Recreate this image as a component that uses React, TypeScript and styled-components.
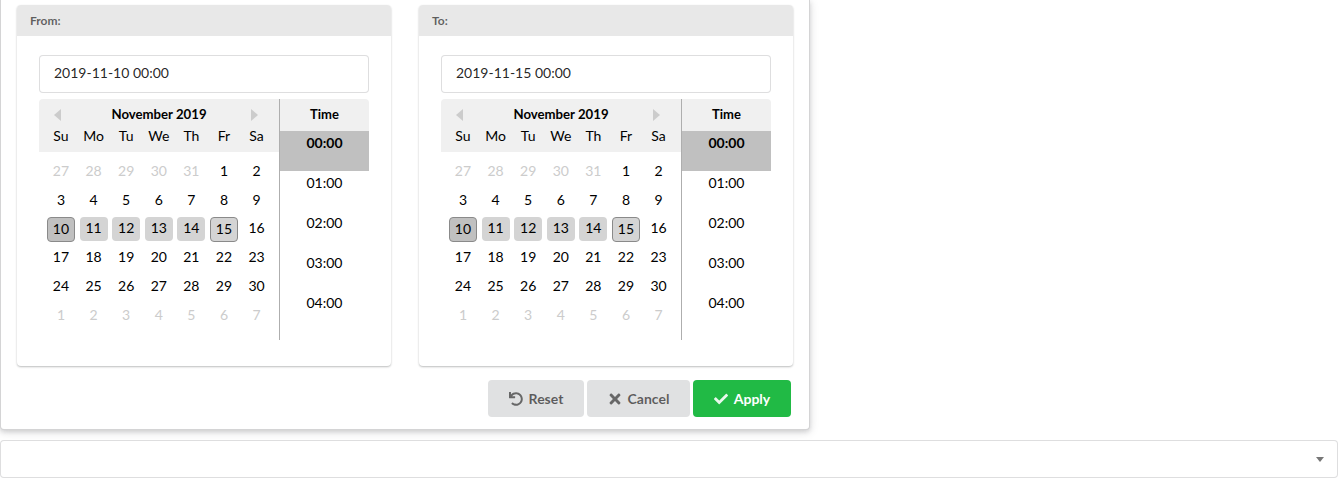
import React from "react";
import styled, { createGlobalStyle } from "styled-components";
import { FaCheck, FaTimes, FaUndo } from "react-icons/fa";

const GlobalStyle = createGlobalStyle`
  html, body {
    margin: 0;
    padding: 0;
    background: #fff;
    font-family: "Lato", "Helvetica Neue", Arial, sans-serif;
    color: rgba(0, 0, 0, 0.87);
  }
  * { box-sizing: border-box; }
`;

const Page = styled.div`
  width: 1338px;
  height: 478px;
  overflow: hidden;
`;

const Popup = styled.div`
  width: 810px;
  height: 430px;
  padding: 5px 16px 0;
  background: #fff;
  border: 1px solid #d4d4d5;
  border-top: none;
  border-radius: 0 0 4px 4px;
  box-shadow: 0 2px 4px 0 rgba(34, 36, 38, 0.12), 0 2px 10px 0 rgba(34, 36, 38, 0.15);
`;

const Pickers = styled.div`
  display: flex;
  gap: 28px;
`;

const Card = styled.div`
  flex: none;
  width: 374px;
  height: 361px;
  border-radius: 4px;
  background: #fff;
  box-shadow: 0 1px 2px 0 rgba(34, 36, 38, 0.3);
`;

const CardHeader = styled.div`
  height: 31px;
  padding: 0 13px;
  display: flex;
  align-items: center;
  background: #e8e8e8;
  border-radius: 4px 4px 0 0;
  font-size: 12px;
  font-weight: 700;
  color: rgba(0, 0, 0, 0.6);
`;

const CardBody = styled.div`
  padding: 19px 22px 0;
`;

const DateInput = styled.input`
  display: block;
  width: 330px;
  height: 38px;
  padding: 0 14px 3px;
  border: 1px solid rgba(34, 36, 38, 0.15);
  border-radius: 4px;
  outline: none;
  font-family: inherit;
  font-size: 14px;
  color: rgba(0, 0, 0, 0.87);
`;

const Calendar = styled.div`
  display: flex;
  margin-top: 6px;
  width: 330px;
  height: 241px;
`;

const Month = styled.div`
  width: 241px;
  border-right: 1px solid #aeaeae;
`;

const MonthHeader = styled.div`
  height: 53px;
  background: #f0f0f0;
  border-top-left-radius: 4px;
`;

const MonthTitle = styled.div`
  position: relative;
  height: 30px;
  display: flex;
  align-items: center;
  justify-content: center;
  font-size: 13.2px;
  font-weight: 700;
  color: #000;
`;

const Arrow = styled.span<{ $side: "left" | "right" }>`
  position: absolute;
  top: 10px;
  ${(p) => (p.$side === "left" ? "left: 15px;" : "right: 21px;")}
  width: 0;
  height: 0;
  border-top: 6px solid transparent;
  border-bottom: 6px solid transparent;
  ${(p) =>
    p.$side === "left"
      ? "border-right: 7px solid #ccc;"
      : "border-left: 7px solid #ccc;"}
`;

const WeekRow = styled.div`
  display: grid;
  grid-template-columns: repeat(7, 32.6px);
  padding-left: 5.7px;
  margin-top: -3px;
`;

const WeekDay = styled.div`
  text-align: center;
  font-size: 14px;
  line-height: 20px;
  color: #000;
`;

const Days = styled.div`
  display: grid;
  grid-template-columns: repeat(7, 32.6px);
  grid-auto-rows: 28.8px;
  padding: 7.4px 0 0 5.7px;
  align-items: start;
  justify-items: center;
`;

const Day = styled.div<{ $muted?: boolean; $range?: boolean; $edge?: "start" | "end" }>`
  width: 28px;
  height: ${(p) => (p.$edge ? 25 : 24)}px;
  padding-bottom: 2px;
  display: flex;
  align-items: center;
  justify-content: center;
  border-radius: 4px;
  font-size: 14px;
  color: ${(p) => (p.$muted ? "#ccc" : "#000")};
  background: ${(p) =>
    p.$edge === "start" ? "#c0c0c0" : p.$range ? "#d4d4d4" : "transparent"};
  border: ${(p) => (p.$edge ? "1px solid #8a8a8a" : "none")};
`;

const TimeColumn = styled.div`
  flex: 1;
  display: flex;
  flex-direction: column;
`;

const TimeHeader = styled.div`
  height: 32px;
  padding-bottom: 2px;
  display: flex;
  align-items: center;
  justify-content: center;
  background: #f0f0f0;
  border-top-right-radius: 4px;
  font-size: 13px;
  font-weight: 700;
  color: #000;
`;

const TimeItem = styled.div<{ $active?: boolean }>`
  height: 40px;
  padding-top: 3px;
  text-align: center;
  font-size: 14px;
  line-height: 18px;
  font-weight: ${(p) => (p.$active ? 700 : 400)};
  color: #000;
  background: ${(p) => (p.$active ? "#c0c0c0" : "transparent")};
`;

const Actions = styled.div`
  display: flex;
  justify-content: flex-end;
  gap: 3px;
  margin-top: 14px;
  padding-right: 2px;
`;

const ActionButton = styled.button<{ $width: number; $primary?: boolean }>`
  width: ${(p) => p.$width}px;
  height: 37px;
  display: flex;
  align-items: center;
  justify-content: center;
  gap: 6px;
  border: none;
  border-radius: 4px;
  font-family: inherit;
  font-size: 14px;
  font-weight: 700;
  background: ${(p) => (p.$primary ? "#21ba45" : "#e0e1e2")};
  color: ${(p) => (p.$primary ? "#fff" : "rgba(0, 0, 0, 0.6)")};

  svg {
    width: 14px;
    height: 14px;
    opacity: 0.9;
  }
`;

const CancelIcon = styled(FaTimes)`
  && {
    height: 16px;
  }
`;

const SelectBox = styled.div`
  position: relative;
  height: 38px;
  margin-top: 10px;
  background: #fff;
  border: 1px solid rgba(34, 36, 38, 0.15);
  border-radius: 4px;
`;

const Caret = styled.span`
  position: absolute;
  right: 13px;
  top: 16px;
  width: 0;
  height: 0;
  border-left: 4.5px solid transparent;
  border-right: 4.5px solid transparent;
  border-top: 5px solid #777;
`;

const weekDays = ["Su", "Mo", "Tu", "We", "Th", "Fr", "Sa"];
const times = ["00:00", "01:00", "02:00", "03:00", "04:00"];

const cells = [
  ...[27, 28, 29, 30, 31].map((d) => ({ d, muted: true })),
  ...Array.from({ length: 30 }, (_, i) => ({ d: i + 1, muted: false })),
  ...[1, 2, 3, 4, 5, 6, 7].map((d) => ({ d, muted: true })),
];

function Picker({ label, value }: { label: string; value: string }) {
  return (
    <Card>
      <CardHeader>{label}</CardHeader>
      <CardBody>
        <DateInput value={value} readOnly />
        <Calendar>
          <Month>
            <MonthHeader>
              <MonthTitle>
                <Arrow $side="left" />
                November 2019
                <Arrow $side="right" />
              </MonthTitle>
              <WeekRow>
                {weekDays.map((w) => (
                  <WeekDay key={w}>{w}</WeekDay>
                ))}
              </WeekRow>
            </MonthHeader>
            <Days>
              {cells.map(({ d, muted }, i) => {
                const inRange = !muted && d >= 10 && d <= 15;
                const edge = muted ? undefined : d === 10 ? "start" : d === 15 ? "end" : undefined;
                return (
                  <Day key={i} $muted={muted} $range={inRange} $edge={edge}>
                    {d}
                  </Day>
                );
              })}
            </Days>
          </Month>
          <TimeColumn>
            <TimeHeader>Time</TimeHeader>
            {times.map((t, i) => (
              <TimeItem key={t} $active={i === 0}>
                {t}
              </TimeItem>
            ))}
          </TimeColumn>
        </Calendar>
      </CardBody>
    </Card>
  );
}

export default function App() {
  return (
    <Page>
      <GlobalStyle />
      <Popup>
        <Pickers>
          <Picker label="From:" value="2019-11-10 00:00" />
          <Picker label="To:" value="2019-11-15 00:00" />
        </Pickers>
        <Actions>
          <ActionButton $width={96}>
            <FaUndo />
            Reset
          </ActionButton>
          <ActionButton $width={103}>
            <CancelIcon />
            Cancel
          </ActionButton>
          <ActionButton $width={98} $primary>
            <FaCheck />
            Apply
          </ActionButton>
        </Actions>
      </Popup>
      <SelectBox>
        <Caret />
      </SelectBox>
    </Page>
  );
}
